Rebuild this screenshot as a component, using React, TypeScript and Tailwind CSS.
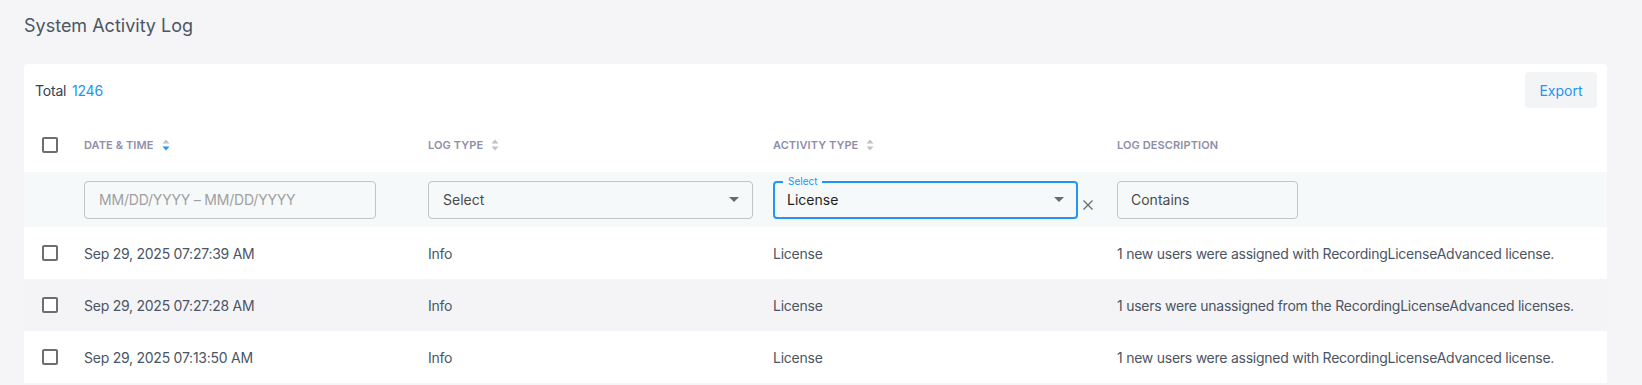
import React from "react";

const SortIcon = ({ active }: { active?: boolean }) => (
  <svg width="8" height="12" viewBox="0 0 8 12" className="ml-[8px]">
    <path d="M4 0.5 L7.5 4.5 L0.5 4.5 Z" fill="#c2c2c2" />
    <path d="M4 11.5 L7.5 7.5 L0.5 7.5 Z" fill={active ? "#2196f3" : "#c2c2c2"} />
  </svg>
);

const Caret = () => (
  <svg width="10" height="5" viewBox="0 0 10 5">
    <path d="M0 0 L10 0 L5 5 Z" fill="#6b6b6b" />
  </svg>
);

const Checkbox = () => (
  <div className="w-[16px] h-[16px] rounded-[2px] border-2 border-[#6e6e6e] bg-white" />
);

const rows = [
  ["Sep 29, 2025 07:27:39 AM", "Info", "License", "1 new users were assigned with RecordingLicenseAdvanced license."],
  ["Sep 29, 2025 07:27:28 AM", "Info", "License", "1 users were unassigned from the RecordingLicenseAdvanced licenses."],
  ["Sep 29, 2025 07:13:50 AM", "Info", "License", "1 new users were assigned with RecordingLicenseAdvanced license."],
];

const grid = "grid grid-cols-[60px_344px_345px_344px_1fr]";

export default function App() {
  return (
    <div
      className="w-[1642px] h-[385px] overflow-hidden bg-[#f5f5f7] pl-[24px] pr-[35px]"
      style={{ fontFamily: "Inter, 'Noto Sans', sans-serif" }}
    >
      <div className="h-[64px] pt-[14px]">
        <h1 className="text-[18px] leading-[24px] text-[#4b5563] font-normal">System Activity Log</h1>
      </div>
      <div className="bg-white rounded-t-[4px]">
        <div className="flex items-center justify-between pl-[11px] pr-[10px] pt-[8px] mb-[10px]">
          <div className="text-[14px] text-[#374151] tracking-[-0.2px]">
            Total <span className="text-[#2196f3] ml-[2px]">1246</span>
          </div>
          <button className="w-[72px] h-[36px] rounded-[4px] bg-[#f3f4f6] text-[14px] text-[#2196f3]">
            Export
          </button>
        </div>
        <div className={`${grid} h-[54px] items-center`}>
          <div className="pl-[18px]"><Checkbox /></div>
          {[
            ["DATE & TIME", true, true],
            ["LOG TYPE", true, false],
            ["ACTIVITY TYPE", true, false],
            ["LOG DESCRIPTION", false, false],
          ].map(([t, s, a], i) => (
            <div key={i} className="flex items-center text-[11px] font-semibold text-[#8e8ea8] tracking-[0.1px]">
              {t as string}
              {s ? <SortIcon active={a as boolean} /> : null}
            </div>
          ))}
        </div>
        <div className={`${grid} h-[55px] items-center bg-[#f6f9fa]`}>
          <div />
          <div>
            <div className="w-[292px] h-[38px] rounded-[4px] border border-[#c4c4c4] bg-[#f6f9fa] flex items-center pl-[14px] text-[14px] text-[#a0a0a0] tracking-[-0.2px]">
              MM/DD/YYYY – MM/DD/YYYY
            </div>
          </div>
          <div>
            <div className="w-[325px] h-[38px] rounded-[4px] border border-[#c4c4c4] bg-[#f6f9fa] flex items-center justify-between pl-[14px] pr-[13px] text-[14px] text-[#4a4a4a]">
              Select
              <Caret />
            </div>
          </div>
          <div className="flex items-center">
            <div className="relative w-[305px] h-[38px] rounded-[4px] border-2 border-[#2196f3] bg-[#f6f9fa] flex items-center justify-between pl-[12px] pr-[12px] text-[14px] text-[#1f1f1f]">
              <span className="absolute left-[8px] top-[-8px] px-[5px] bg-[#f6f9fa] text-[10px] leading-[12px] text-[#2196f3]">
                Select
              </span>
              License
              <Caret />
            </div>
            <svg width="10" height="10" viewBox="0 0 10 10" className="ml-[5px] mt-[10px]">
              <path d="M0.5 0.5 L9.5 9.5 M9.5 0.5 L0.5 9.5" stroke="#6b6b6b" strokeWidth="1.3" />
            </svg>
          </div>
          <div>
            <div className="w-[181px] h-[38px] rounded-[4px] border border-[#c4c4c4] bg-[#f6f9fa] flex items-center pl-[13px] text-[14px] text-[#4a4a4a]">
              Contains
            </div>
          </div>
        </div>
        {rows.map((r, i) => (
          <div
            key={i}
            className={`${grid} h-[52px] items-center text-[14px] text-[#4b5563] tracking-[-0.25px] ${i % 2 === 1 ? "bg-[#f4f4f6]" : "bg-white"}`}
          >
            <div className="pl-[18px]"><Checkbox /></div>
            {r.map((c, j) => (
              <div key={j}>{c}</div>
            ))}
          </div>
        ))}
      </div>
    </div>
  );
}
